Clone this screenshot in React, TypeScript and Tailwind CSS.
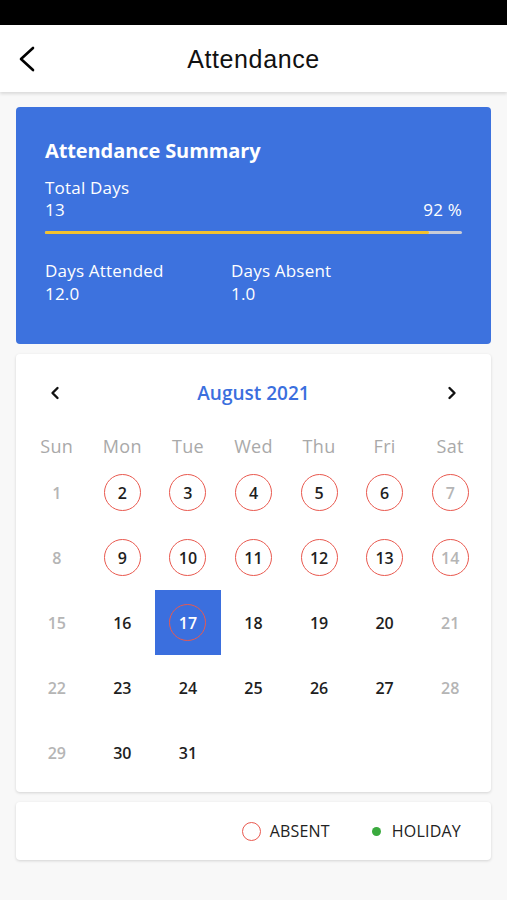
const FONT = { fontFamily: '"Open Sans", "Noto Sans", sans-serif' };

type Day = { n: number; weekend?: boolean; absent?: boolean; selected?: boolean };

const weeks: (Day | null)[][] = [
  [1, 2, 3, 4, 5, 6, 7],
  [8, 9, 10, 11, 12, 13, 14],
  [15, 16, 17, 18, 19, 20, 21],
  [22, 23, 24, 25, 26, 27, 28],
  [29, 30, 31, 0, 0, 0, 0],
].map((row) =>
  row.map((n, i) =>
    n === 0
      ? null
      : {
          n,
          weekend: i === 0 || i === 6,
          absent: (n >= 2 && n <= 7) || (n >= 9 && n <= 14) || n === 17,
          selected: n === 17,
        }
  )
);

const dayNames = ['Sun', 'Mon', 'Tue', 'Wed', 'Thu', 'Fri', 'Sat'];

function Chevron({ dir, className }: { dir: 'left' | 'right'; className?: string }) {
  return (
    <svg viewBox="0 0 10 14" className={className} fill="none" stroke="currentColor" strokeWidth={2.4} strokeLinecap="round" strokeLinejoin="round">
      {dir === 'left' ? <polyline points="7.5,2 2.5,7 7.5,12" /> : <polyline points="2.5,2 7.5,7 2.5,12" />}
    </svg>
  );
}

function DayCell({ day }: { day: Day | null }) {
  if (!day) return <div className="h-[65px]" />;
  const color = day.selected
    ? 'text-white'
    : day.weekend
    ? 'text-[#b5b5b5]'
    : 'text-[#1e1e1e]';
  return (
    <div
      className={`h-[65px] flex items-center justify-center ${
        day.selected ? 'bg-[#3b6fde]' : ''
      }`}
    >
      <div
        className={`w-[37px] h-[37px] rounded-full flex items-center justify-center text-[16px] font-semibold ${color} ${
          day.absent ? 'border-[1.5px] border-[#e9594f]' : ''
        }`}
      >
        {day.n}
      </div>
    </div>
  );
}

export default function App() {
  return (
    <div className="min-h-screen bg-[#f8f8f8]" style={FONT}>
      <div className="h-[25px] bg-black" />
      <header className="relative h-[67px] bg-white flex items-center justify-center shadow-[0_2px_3px_rgba(0,0,0,0.12)]">
        <button className="absolute left-[18px] top-[21px] text-black">
          <svg viewBox="0 0 18 26" className="w-[18px] h-[26px]" fill="none" stroke="currentColor" strokeWidth={2.6} strokeLinecap="round" strokeLinejoin="round">
            <polyline points="15,2 3,13 15,24" />
          </svg>
        </button>
        <h1
          className="text-[25px] text-[#111] tracking-[0.6px] pt-[2px]"
          style={{ fontFamily: '"Liberation Sans", Arial, sans-serif' }}
        >
          Attendance
        </h1>
      </header>

      <div className="px-4 pt-[15px] flex flex-col gap-[10px]">
        <section className="bg-[#3d72de] rounded-[4px] px-[29px] pt-[30px] pb-[39px] text-white">
          <h2 className="text-[20px] font-bold leading-[28px] tracking-[-0.1px]">Attendance Summary</h2>
          <p className="mt-[12px] text-[17px] leading-[22px] tracking-[0.2px]">Total Days</p>
          <div className="flex justify-between text-[17px] leading-[22px] tracking-[0.2px]">
            <span>13</span>
            <span>92 %</span>
          </div>
          <div className="mt-[10px] h-[3px] bg-[#c9ccd6] rounded-full flex">
            <div className="h-full bg-[#f2c12e] rounded-full" style={{ width: '92%' }} />
          </div>
          <div className="mt-[25px] flex text-[17px] leading-[23px] tracking-[0.2px]">
            <div className="w-[186px]">
              <p>Days Attended</p>
              <p>12.0</p>
            </div>
            <div>
              <p>Days Absent</p>
              <p>1.0</p>
            </div>
          </div>
        </section>

        <section className="bg-white rounded-[4px] shadow-[0_1px_3px_rgba(0,0,0,0.15)] px-[8px] pt-[25px] pb-[7px]">
          <div className="flex items-center justify-between px-[26px] h-[28px]">
            <Chevron dir="left" className="w-[10px] h-[14px] text-[#111]" />
            <span className="text-[19px] font-semibold text-[#3b6fde]">August 2021</span>
            <Chevron dir="right" className="w-[10px] h-[14px] text-[#111]" />
          </div>
          <div className="grid grid-cols-7 mt-[26px]">
            {dayNames.map((d) => (
              <div key={d} className="h-[26px] flex items-center justify-center text-[18px] text-[#a9a9a9] tracking-[0.3px]">
                {d}
              </div>
            ))}
          </div>
          <div className="grid grid-cols-7 mt-[1px]">
            {weeks.flat().map((day, i) => (
              <DayCell key={i} day={day} />
            ))}
          </div>
        </section>

        <section className="bg-white rounded-[4px] shadow-[0_1px_3px_rgba(0,0,0,0.15)] h-[58px] flex items-center justify-end pr-[30px] text-[16px] text-[#222]">
          <span className="w-[19px] h-[19px] rounded-full border-[1.5px] border-[#e9594f]" />
          <span className="ml-[9px] tracking-[0.2px]">ABSENT</span>
          <span className="ml-[42px] w-[9px] h-[9px] rounded-full bg-[#3aaa3e]" />
          <span className="ml-[11px] tracking-[0.2px]">HOLIDAY</span>
        </section>
      </div>
    </div>
  );
}
